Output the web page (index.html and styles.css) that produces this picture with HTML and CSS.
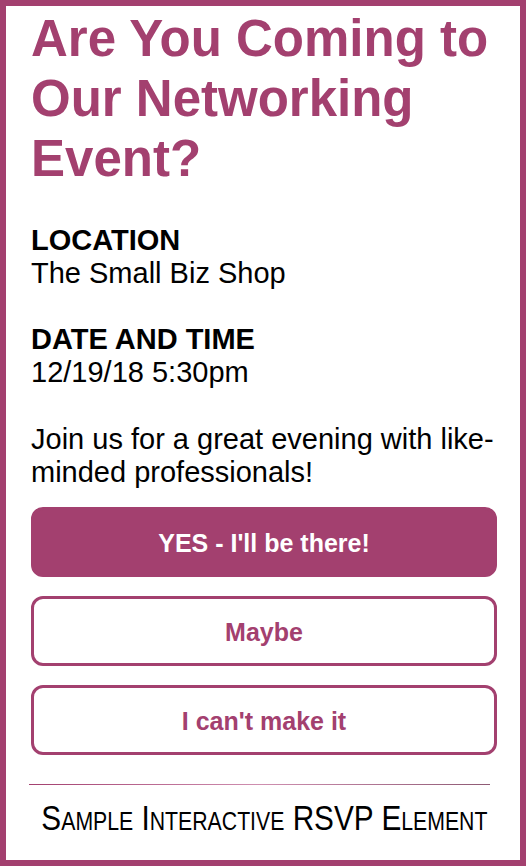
FILE: index.html
```html
<!DOCTYPE html>
<html lang="en">
<head>
    <meta charset="UTF-8">
    <meta name="viewport" content="width=device-width, initial-scale=1.0">
    <title>RSVP</title>
    <link rel="stylesheet" href="styles.css">
</head>
<body>
    <div class="card">
        <h1 class="title">Are You Coming to Our Networking Event?</h1>
        <div class="info">
            <h2 class="label">LOCATION</h2>
            <p class="value">The Small Biz Shop</p>
        </div>
        <div class="info">
            <h2 class="label">DATE AND TIME</h2>
            <p class="value">12/19/18 5:30pm</p>
        </div>
        <p class="intro">Join us for a great evening with like-minded professionals!</p>
        <div class="answers">
            <button class="answer answer-yes">YES - I'll be there!</button>
            <button class="answer">Maybe</button>
            <button class="answer">I can't make it</button>
        </div>
        <div class="divider"></div>
        <p class="caption"><span class="caption-text">Sample Interactive RSVP Element</span></p>
    </div>
</body>
</html>
```

FILE: styles.css
```css
html, body {
    margin: 0;
    padding: 0;
    background-color: #fff;
}
body {
    font-family: "Liberation Sans", Arial, sans-serif;
    color: #000;
    overflow: hidden;
}
.card {
    box-sizing: border-box;
    min-height: 100vh;
    border: 6px solid #a3406f;
    padding: 3px 23px 0 25px;
    display: flex;
    flex-direction: column;
}
.title {
    margin: 0;
    color: #a3406f;
    font-size: 51px;
    line-height: 60px;
    font-weight: bold;
}
.info {
    margin-top: 35px;
}
.info + .info {
    margin-top: 33px;
}
.label {
    margin: 0;
    font-size: 29px;
    line-height: 33px;
    font-weight: bold;
}
.value {
    margin: 0;
    font-size: 29px;
    line-height: 33px;
}
.intro {
    margin: 34px 0 18px;
    font-size: 29px;
    line-height: 33px;
}
.answers {
    display: flex;
    flex-direction: column;
    gap: 19px;
}
.answer {
    height: 70px;
    width: 100%;
    border: 3px solid #a3406f;
    border-radius: 12px;
    background-color: #fff;
    color: #a3406f;
    font-family: "Liberation Sans", Arial, sans-serif;
    font-size: 25px;
    font-weight: bold;
    padding-top: 3px;
    cursor: pointer;
}
.answer-yes {
    background-color: #a3406f;
    color: #fff;
}
.divider {
    height: 1px;
    margin: 29px 7px 0 -2px;
    background: linear-gradient(to right, #a3406f, #cf8fb0 50%, #8e5a74);
}
.caption {
    margin: 13px 0 0;
    display: flex;
    justify-content: center;
    overflow: hidden;
    font-family: "Liberation Sans", Arial, sans-serif;
    font-variant: small-caps;
    font-size: 35px;
    line-height: 40px;
    white-space: nowrap;
}
.caption-text {
    flex-shrink: 0;
    transform: scaleX(0.85);
}
```
